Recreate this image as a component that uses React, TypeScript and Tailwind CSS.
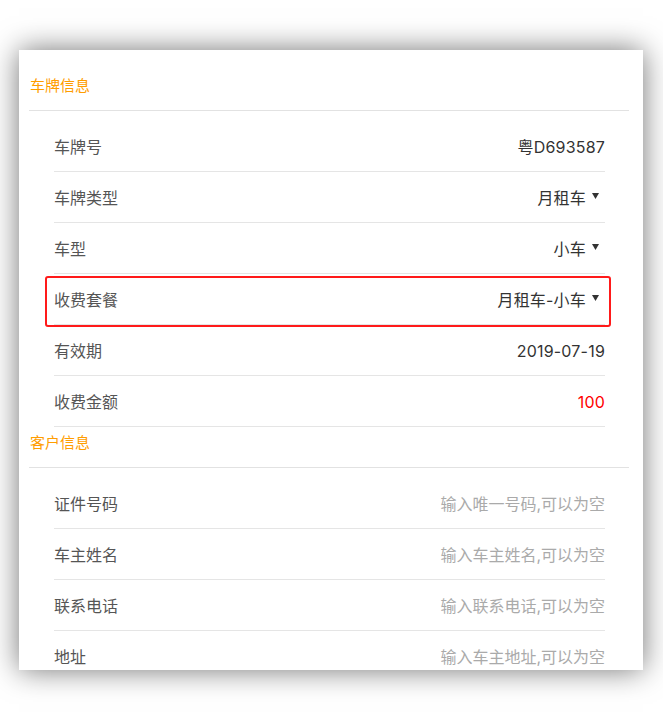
import React from "react";

const font = { fontFamily: 'Inter, "Noto Sans CJK SC", "Noto Sans", sans-serif' };

function Caret() {
  return (
    <svg width="7" height="6" viewBox="0 0 7 6" className="ml-[6px] mr-[6px] -translate-y-[2px]">
      <path d="M0 0 L7 0 L3.5 6 Z" fill="#333" />
    </svg>
  );
}

type RowProps = {
  label: string;
  value: string;
  dropdown?: boolean;
  valueClass?: string;
  highlight?: boolean;
};

function Row({ label, value, dropdown, valueClass, highlight }: RowProps) {
  return (
    <div className="relative ml-[35px] mr-[38px] flex h-[51px] items-center justify-between border-b border-[#e5e5e5] pt-[2px]">
      <span className="text-[16px] text-[#555]">{label}</span>
      <span className="flex items-center">
        <span className={`text-[16px] ${valueClass ?? "tracking-[0.2px] text-[#333]"}`}>{value}</span>
        {dropdown && <Caret />}
      </span>
      {highlight && (
        <div className="absolute -left-[9px] -right-[6px] top-[2px] h-[51px] rounded-[3px] border-2 border-[#ff1a1a]" />
      )}
    </div>
  );
}

function Header({ title, first }: { title: string; first?: boolean }) {
  return (
    <div
      className={`ml-[10px] mr-[14px] border-b border-[#e2e2e2] pb-[9px] ${first ? "pt-[21px]" : "pt-[1px]"}`}
    >
      <div className="pl-[1px] text-[15px] leading-[30px] text-[#ff9d00]">{title}</div>
    </div>
  );
}

export default function App() {
  return (
    <div className="min-h-[722px] w-[663px] bg-white pl-[19px] pt-[50px]" style={font}>
      <div className="h-[620px] w-[624px] overflow-hidden bg-white shadow-[0_0_28px_rgba(0,0,0,0.55)]">
        <Header title="车牌信息" first />
        <div className="h-[10px]" />
        <Row label="车牌号" value="粤D693587" />
        <Row label="车牌类型" value="月租车" dropdown />
        <Row label="车型" value="小车" dropdown />
        <Row label="收费套餐" value="月租车-小车" dropdown highlight />
        <Row label="有效期" value="2019-07-19" />
        <Row label="收费金额" value="100" valueClass="tracking-[0.2px] text-[#ff0000]" />
        <Header title="客户信息" />
        <div className="h-[10px]" />
        <Row label="证件号码" value="输入唯一号码,可以为空" valueClass="text-[#aaa]" />
        <Row label="车主姓名" value="输入车主姓名,可以为空" valueClass="text-[#aaa]" />
        <Row label="联系电话" value="输入联系电话,可以为空" valueClass="text-[#aaa]" />
        <Row label="地址" value="输入车主地址,可以为空" valueClass="text-[#aaa]" />
      </div>
    </div>
  );
}
